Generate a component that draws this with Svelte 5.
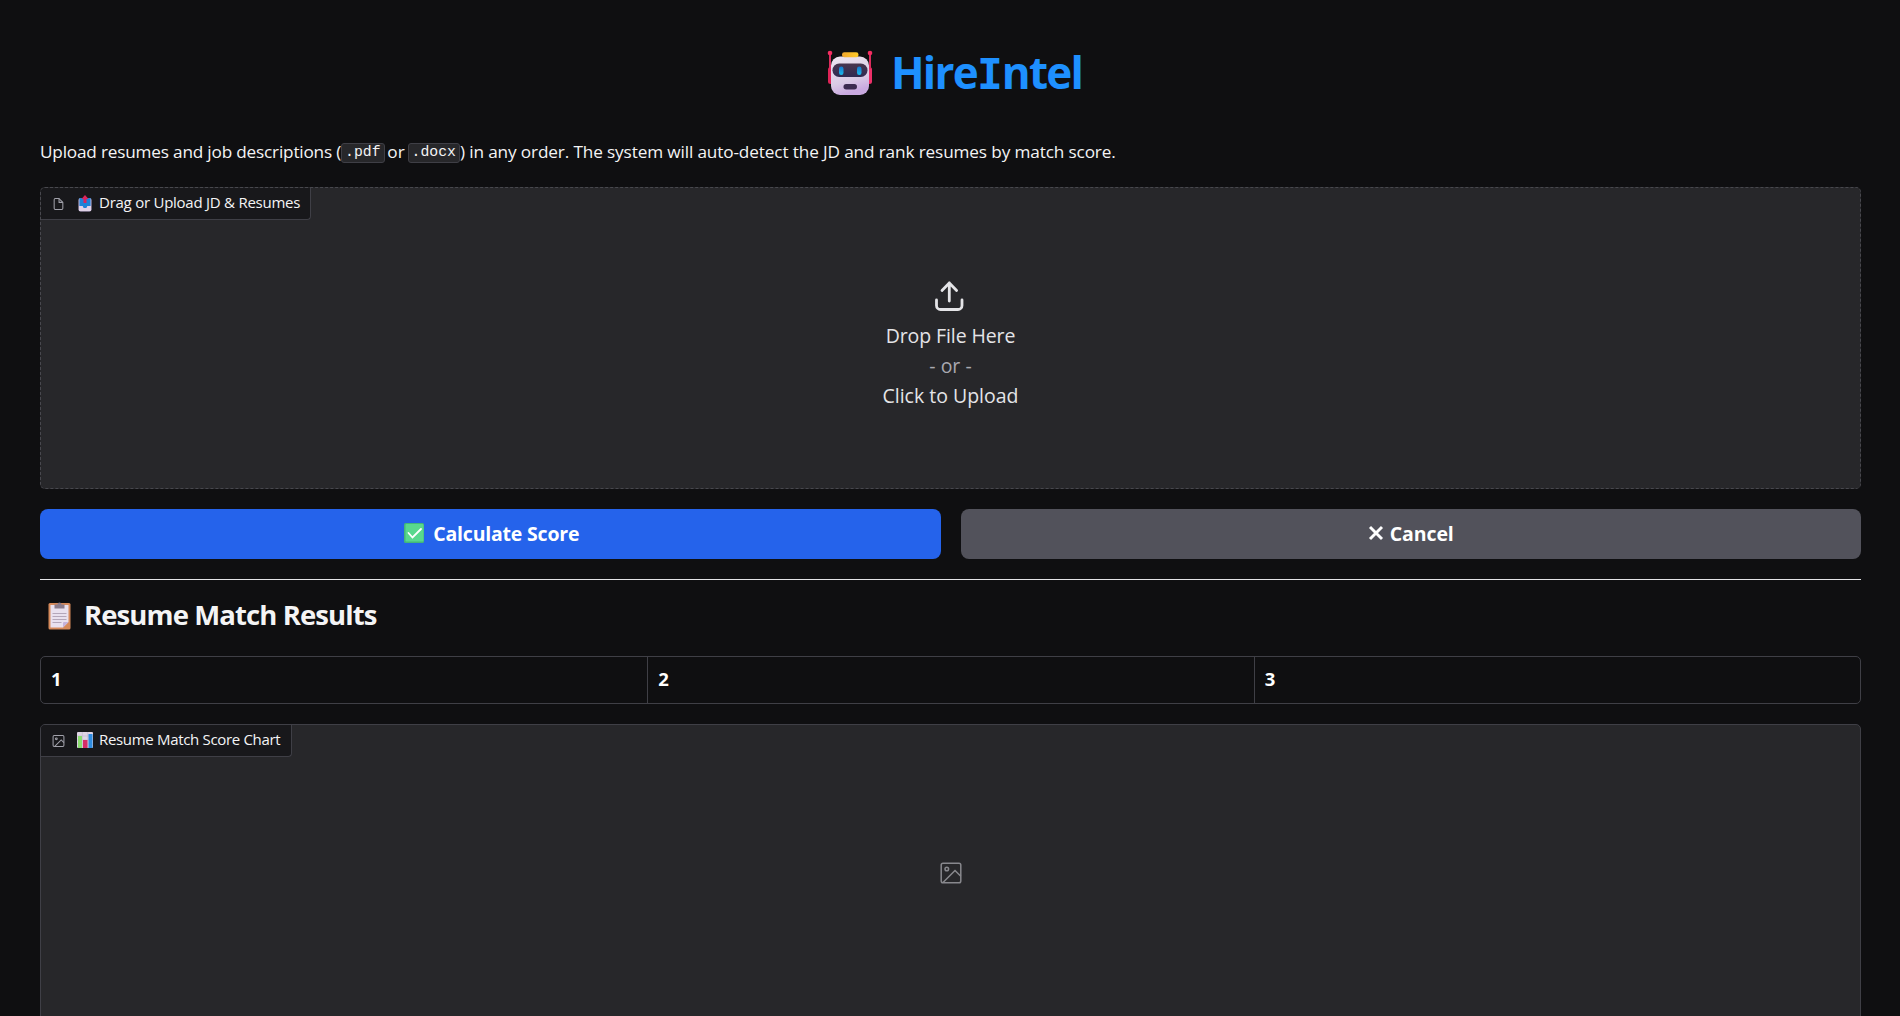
<script>
  const columns = [1, 2, 3];
</script>

<main>
  <h1>
    <svg class="robot" viewBox="0 0 46 46" aria-hidden="true">
      <defs>
        <linearGradient id="head" x1="0" y1="0" x2="0.3" y2="1"><stop stop-color="#eee6f0" /><stop offset=".7" stop-color="#dacbe5" /><stop offset="1" stop-color="#c9a9e0" /></linearGradient>
        <linearGradient id="visor" x1="0" y1="0" x2="0" y2="1"><stop stop-color="#49364f" /><stop offset="1" stop-color="#302b52" /></linearGradient>
        <linearGradient id="eye" x1="0" y1="0" x2="0" y2="1"><stop stop-color="#1678cf" /><stop offset="1" stop-color="#1cbbea" /></linearGradient>
        <linearGradient id="hat"><stop stop-color="#f1a72e" /><stop offset="1" stop-color="#ffcb29" /></linearGradient>
      </defs>
      <rect x="1" y="17" width="5" height="17" rx="2.5" fill="#de2357" />
      <rect x="40" y="17" width="5" height="17" rx="2.5" fill="#ed3069" />
      <path d="M3 4v15M43 4v15" stroke="#db2b5c" stroke-width="2" />
      <circle cx="3" cy="3" r="2.3" fill="#f32d61" /><circle cx="43" cy="3" r="2.3" fill="#f32d61" />
      <rect x="4" y="6.5" width="38" height="38.5" rx="9" fill="url(#head)" />
      <rect x="15" y="2.3" width="16.5" height="5" rx="2.3" fill="url(#hat)" />
      <rect x="5.5" y="13.5" width="35" height="13.5" rx="6.7" fill="url(#visor)" />
      <rect x="12" y="16.5" width="4.5" height="8.5" rx="2.2" fill="url(#eye)" />
      <rect x="30" y="16.5" width="4.5" height="8.5" rx="2.2" fill="url(#eye)" />
      <rect x="16.5" y="34" width="13.5" height="5.4" rx="2.7" fill="#3c2b50" />
    </svg>
    <span class="brand">Hire<span class="slab">I</span>ntel</span>
  </h1>

  <p class="intro"><span class="lead">Upload resumes and job descriptions (</span><code>.pdf</code><span class="or">or</span><code>.docx</code><span class="rest">) in any order. The system will auto-detect the JD and rank resumes by match score.</span></p>

  <section class="panel upload">
    <div class="label">
      <svg class="small" viewBox="0 0 24 24" fill="none" stroke="#a1a1aa" stroke-width="1.9" stroke-linejoin="round"><path d="M13 2H6a2 2 0 0 0-2 2v16a2 2 0 0 0 2 2h12a2 2 0 0 0 2-2V9z" /><path d="M13 2v7h7" /></svg>
      <svg class="emoji" viewBox="0 0 16 18" aria-hidden="true">
        <rect x="1.5" y="4" width="13" height="13.5" rx="2" fill="#c7b7df" />
        <path d="M2.5 4h11v8h-3l-1 2h-3l-1-2h-3z" fill="#1d82d8" />
        <path d="M2 12h3.5l1 2h3l1-2H14v5H2z" fill="#e0d2e8" />
        <path d="M8 1l3.500 4H9.500v4h-3V5h-2z" fill="#dc245c" />
      </svg>
      <span class="t-upload">Drag or Upload JD &amp; Resumes</span>
    </div>
    <div class="drop">
      <svg class="up" viewBox="0 0 30 30" fill="none" stroke="#e4e4e7" stroke-width="2.800" stroke-linecap="round" stroke-linejoin="round"><path d="M1.500 19v5.500a4 4 0 0 0 4 4h17.500a4 4 0 0 0 4-4V19M7 9.500l7.300-7.500 7.300 7.500M14.300 2v18" /></svg>
      <span class="t-drop">Drop File Here</span>
      <span class="t-or">- or -</span>
      <span class="t-click">Click to Upload</span>
    </div>
  </section>

  <div class="actions">
    <button class="primary">
      <svg class="check" viewBox="0 0 20 20"><rect width="20" height="20" rx="1.500" fill="#42b879" /><rect x="1.500" y="1" width="18" height="17.500" rx="1" fill="#59d88d" /><path d="M4.500 10l4 4.500 8.500-8.500" fill="none" stroke="#fff" stroke-width="1.800" stroke-linecap="round" /></svg>
      <span class="t-calc">Calculate Score</span>
    </button>
    <button class="secondary">
      <svg class="cross" viewBox="0 0 16 16"><path d="M2 2l12 12M14 2L2 14" stroke="#fff" stroke-width="2.900" /></svg>
      <span class="t-cancel">Cancel</span>
    </button>
  </div>

  <hr />

  <h2>
    <svg class="clip" viewBox="0 0 23 28" aria-hidden="true">
      <rect x=".5" y="1" width="22" height="26.500" rx="1.500" fill="#d68a5b" />
      <path d="M2.500 3h18v17l-5.500 5.500H2.500z" fill="#e9e1ef" />
      <path d="M20.500 20l-5.500 5.500V21q0-1 1-1z" fill="#c5b3dc" />
      <path d="M6.500 2.500h3a2 2 0 0 1 4 0h3v4h-10z" fill="#8b7c8c" />
      <path d="M4.500 11.500h14M4.500 14.500h14M4.500 17.500h14M4.500 20.500h9" stroke="#b4a7ba" />
    </svg>
    <span>Resume Match Results</span>
  </h2>

  <div class="table">
    {#each columns as column}<div class="cell">{column}</div>{/each}
  </div>

  <section class="panel chart">
    <div class="label">
      <svg class="small image" viewBox="0 0 24 24" fill="none" stroke="#a1a1aa" stroke-width="1.900"><rect x="2" y="2" width="20" height="20" rx="2" /><circle cx="8" cy="8" r="1.700" /><path d="M22 15l-5-5L5 22" /></svg>
      <svg class="emoji bars" viewBox="0 0 16 16" aria-hidden="true"><rect width="16" height="16" rx="1" fill="#dfd4e5" /><path d="M0 4h16M0 8h16M0 12h16M5.300 0v16M10.700 0v16" stroke="#c1b5ce" stroke-width=".6" /><rect x="1" y="4" width="4" height="12" fill="#8bdc70" /><rect x="6" y="8" width="4.500" height="8" fill="#d82c68" /><rect x="11.500" y="2" width="4" height="14" fill="#2e8ce0" /></svg>
      <span class="t-chart">Resume Match Score Chart</span>
    </div>
    <svg class="placeholder" viewBox="0 0 22 22" fill="none" stroke="#88888d" stroke-width="1.500"><rect x="1.200" y="1.200" width="19.600" height="19.600" rx="1.800" /><circle cx="6.800" cy="7" r="1.800" /><path d="M3 20.500L15 8.500l5.800 5.800" /></svg>
  </section>
</main>

<style>
  :global(body) { background: #0f0f11; overflow: hidden; }
  main { box-sizing: border-box; width: 1900px; height: 1016px; padding: 0 39px 0 40px; overflow: hidden; background: #0f0f11; color: #f4f4f5; font-family: "Open Sans", "Noto Sans", sans-serif; display: flex; flex-direction: column; }
  svg { display: block; flex: none; }
  span { white-space: nowrap; }
  h1 { flex: none; margin: 0; height: 142px; display: flex; padding: 50px 0 0 787px; box-sizing: border-box; }
  .robot { width: 46px; height: 46px; }
  .brand { margin: -8px 0 0 18px; font-size: 44px; line-height: 60px; font-weight: 700; color: #1e90ff; letter-spacing: -1.800px; }
  .slab { font-family: "DejaVu Sans Mono", monospace; font-size: 43px; letter-spacing: -1px; }
  .intro { flex: none; margin: 0; height: 45px; display: flex; align-items: flex-start; font-size: 17.200px; line-height: 20px; }
  .lead { width: 301px; letter-spacing: -0.190px; }
  code { box-sizing: border-box; margin-top: 1px; height: 20px; padding: 0 3px; border: 1px solid #3f3f46; border-radius: 3px; background: #27272a; font: 14.800px/17px "Liberation Mono", monospace; white-space: nowrap; }
  .or { width: 23px; text-align: center; }
  .rest { letter-spacing: -0.130px; }
  .panel { box-sizing: border-box; flex: none; background: #27272a; border: 1px solid #3f3f46; border-radius: 5px; }
  .upload { height: 302px; border-style: dashed; border-color: #48484e; }
  .label { box-sizing: border-box; height: 32px; border: solid #3f3f46; border-width: 0 1px 1px 0; border-radius: 4px 0 4px 0; background: #18181b; display: flex; align-items: center; padding-left: 11px; font-size: 15px; line-height: 30px; }
  .upload .label { width: 270px; }
  .chart .label { width: 251px; }
  .small { width: 13px; height: 14px; margin-top: 1px; }
  .emoji { width: 16px; height: 18px; margin: -2px 6px 0 12px; }
  .bars { height: 16px; }
  .t-upload { letter-spacing: -0.250px; margin-top: -3px; }
  .t-chart { letter-spacing: -0.320px; margin-top: -3px; }
  .drop { display: flex; flex-direction: column; align-items: center; padding-top: 61px; font-size: 19.500px; line-height: 30px; color: #e4e4e7; }
  .up { width: 30px; height: 30px; margin-right: 2px; margin-bottom: 10px; }
  .t-or { color: #a9a9b0; }
  .t-drop { letter-spacing: -0.100px; }
  .actions { margin-top: 20px; display: grid; grid-template-columns: 1fr 1fr; gap: 20px; flex: none; }
  button { height: 50px; border: 0; border-radius: 8px; color: #fff; font: 700 19.500px/50px "Open Sans", sans-serif; display: flex; align-items: center; justify-content: center; padding: 0; }
  .primary { background: #2563eb; padding-left: 3px; }
  .secondary { background: #52525b; }
  .check { width: 20px; height: 20px; margin-right: 9px; margin-top: -2px; }
  .cross { width: 16px; height: 16px; margin-right: 6px; margin-top: -2px; }
  .t-calc { letter-spacing: -0.200px; margin-top: -1px; }
  .t-cancel { letter-spacing: -0.100px; margin-top: -1px; }
  hr { width: 100%; height: 1px; margin: 20px 0 0; border: 0; background: #e4e4e7; flex: none; }
  h2 { box-sizing: border-box; flex: none; height: 76px; margin: 0; padding: 15px 0 0 8px; display: flex; font-size: 27.500px; line-height: 40px; letter-spacing: -0.900px; }
  .clip { width: 23px; height: 28px; margin: 7px 13px 0 0; }
  .table { box-sizing: border-box; flex: none; height: 48px; border: 1px solid #3f3f46; border-radius: 5px; display: grid; grid-template-columns: repeat(3, 1fr); }
  .cell { padding-left: 10px; font-size: 18.500px; line-height: 43px; font-weight: 700; color: #fff; }
  .cell + .cell { border-left: 1px solid #3f3f46; }
  .chart { margin-top: 20px; height: 320px; }
  .placeholder { width: 22px; height: 22px; margin: 105px auto 0; }
</style>
